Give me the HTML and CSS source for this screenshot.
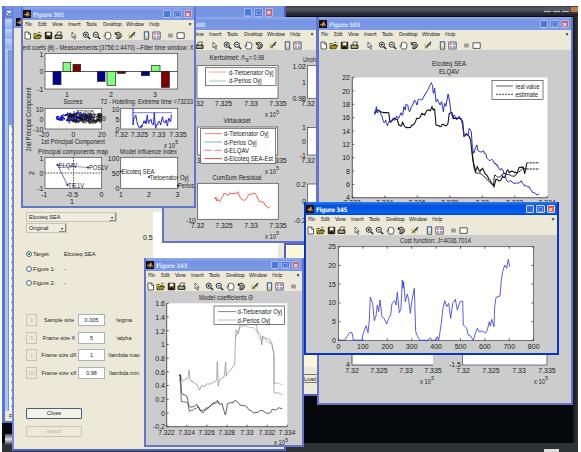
FILE: index.html
```html
<!DOCTYPE html>
<html lang="en">
<head>
<meta charset="utf-8">
<title>Desktop</title>
<link rel="stylesheet" href="styles.css">
</head>
<body>
<main class="desktop">
  <div class="app-bar"><i></i><i></i><i></i><i class="close"></i></div>
  <div class="edge"></div>
  <div class="taskbar"><span></span></div>
  <div class="tray"></div>

  <section class="word">
    <div class="word-title"><svg viewBox="0 0 9 8"><path d="M1 1h6v6H1z" fill="#e8f0ff" stroke="#3058b0"/><path d="M2.5 3l1 3 1-2 1 2 1-3" fill="none" stroke="#3058b0" stroke-width=".8"/></svg>07</div>
    <div class="word-bars"></div>
    <div class="word-ruler"></div>
    <div class="word-status">P</div>
  </section>

  <section class="gui">
    <div class="gui-title"><svg class="logo"><use href="#logo"/></svg><div class="buttons"><b>_</b><b>□</b><b class="x">×</b></div></div>
    <div class="gui-body">
      <form class="controls">
        <div class="select wide">Elcoteq SEA<em>▾</em></div>
        <div class="select">Original<em>▾</em></div>
        <div class="radios">
          <label class="on"><i></i><span>Target:</span>Elcoteq SEA</label>
          <label><i></i><span>Figure 1:</span>-</label>
          <label><i></i><span>Figure 2:</span>-</label>
        </div>
        <div class="params">
          <i>1</i><span>Sample size</span><b>0.005</b><span>\sigma</span>
          <i>5</i><span>Frame size X</span><b>5</b><span>\alpha</span>
          <i>1</i><span>Frame size dX</span><b>1</b><span>\lambda max</span>
          <i>20</i><span>Frame size sX</span><b>0.98</b><span>\lambda min</span>
        </div>
        <div class="push">Close</div>
        <div class="push off">report</div>
      </form>
      <div class="plot"><span>0.5</span><div></div></div>
    </div>
  </section>

  <section class="loader"><div class="paper"></div><div class="load">Load</div></section>

  <section class="fig f500 inactive" data-title="Figure 500" data-box="162 17 156 226"></section>
  <section class="fig f301 inactive" data-title="Figure 301" data-box="21 7 175 201"></section>
  <section class="fig f503 inactive" data-title="Figure 503" data-box="317 17 256 388"></section>
  <section class="fig f343 inactive" data-title="Figure 343" data-box="144 258 160 189"></section>
  <section class="fig f345" data-title="Figure 345" data-box="304 202 255 153"></section>
</main>

<svg class="defs">
  <symbol id="logo" viewBox="0 0 8 8"><rect width="8" height="8" fill="#101018"/><path d="M.8 5L3 3.6 5 1l2.3 5.4L5.6 5.3 4 7 3 5.2z" fill="#e87820"/><path d="M.8 5L3 3.6 4 4.2 3 5.2z" fill="#58b0d0"/></symbol>
  <symbol id="new" viewBox="0 0 9 9"><path d="M2 1h3.5L7.5 3v5H2z" fill="#fff" stroke="#333" stroke-width=".8"/><path d="M5.3 1v2.2h2.2" fill="none" stroke="#333" stroke-width=".7"/></symbol>
  <symbol id="open" viewBox="0 0 9 9"><path d="M1 7.5V2.5h2.5l.8 1H7v1" fill="#f0e070" stroke="#554c10" stroke-width=".9"/><path d="M1 7.7L2.7 4.5h6L7 7.7z" fill="#a09020" stroke="#3c3808" stroke-width=".8"/><path d="M5 1.5q2-1 3 1" fill="none" stroke="#222" stroke-width=".7"/></symbol>
  <symbol id="save" viewBox="0 0 9 9"><path d="M1.3 1.3h6.4v6.4H1.3z" fill="#504818" stroke="#111"/><path d="M2.8 1.5h3.6v2.8H2.8z" fill="#f4f4f4"/><path d="M3 5.6h3v2H3z" fill="#111"/></symbol>
  <symbol id="print" viewBox="0 0 9 9"><path d="M2.5 4l1-3h4l-1 3" fill="#fff" stroke="#333" stroke-width=".8"/><path d="M1 4h7v3.5H1z" fill="#8b8978" stroke="#222" stroke-width=".9"/><path d="M2 5.8h4" stroke="#eee060" stroke-width=".8"/></symbol>
  <symbol id="arrow" viewBox="0 0 9 9"><path d="M3 1v5.8l1.4-1.3 1.2 2.7 1-.5-1.2-2.5h1.7z" fill="#fff" stroke="#333" stroke-width=".7"/></symbol>
  <symbol id="zin" viewBox="0 0 9 9"><circle cx="3.8" cy="3.7" r="2.6" fill="#e4f0fa" stroke="#222" stroke-width=".9"/><path d="M2.4 3.7h2.8M3.8 2.3v2.8" stroke="#111" stroke-width=".8"/><path d="M5.7 5.7L8.2 8" stroke="#222" stroke-width="1.4"/></symbol>
  <symbol id="zout" viewBox="0 0 9 9"><circle cx="3.8" cy="3.7" r="2.6" fill="#e4f0fa" stroke="#222" stroke-width=".9"/><path d="M2.4 3.7h2.8" stroke="#111" stroke-width=".8"/><path d="M5.7 5.7L8.2 8" stroke="#222" stroke-width="1.4"/></symbol>
  <symbol id="hand" viewBox="0 0 9 9"><path d="M3 8L.8 4.8l.8-.6 1.2 1L2.2 2l.9-.2L3.7 1l.8.6 1-.6.7.9 1 0 .9 2.4L7 8z" fill="#fff" stroke="#333" stroke-width=".8"/></symbol>
  <symbol id="rot" viewBox="0 0 9 9"><path d="M2 2.2A3.2 3.2 0 1 1 1.8 6.7" fill="none" stroke="#222"/><path d="M.8.8v3h3z" fill="#222"/><path d="M3 4l1.5-1L6 4v2L4.5 7 3 6z" fill="#aaa" stroke="#222" stroke-width=".7"/></symbol>
  <symbol id="brush" viewBox="0 0 9 9"><path d="M1 2h4v5H1z" fill="#e4deb4"/><path d="M3.5 6L8 1" stroke="#333" stroke-width="1.3"/><path d="M2 4.4l3 3M2 7.5l2.5-3" stroke="#777010"/><path d="M6 4h2" stroke="#4060c0"/></symbol>
  <symbol id="cbar" viewBox="0 0 9 9"><path d="M2.3.8h4.4v7.4H2.3z" fill="#d4ecff" stroke="#243c70" stroke-width=".9"/><path d="M3.2 5h2.7v2.5H3.2z" fill="#f0d060"/></symbol>
  <symbol id="leg" viewBox="0 0 9 9"><path d="M.8 1h7.4v7H.8z" fill="#f8f8ff" stroke="#504868" stroke-width=".9"/><path d="M2 3h2M2 6h2" stroke="#c02020"/><path d="M5 3h2.3M5 6h2.3" stroke="#2038a0"/></symbol>
  <symbol id="sq" viewBox="0 0 9 9"><path d="M2.2 2.5h4.6v4H2.2z" fill="#999"/></symbol>
  <symbol id="rect" viewBox="0 0 9 9"><path d="M1 1.8h7.2v5.6H1z" fill="#fff" stroke="#444" stroke-width=".9"/></symbol>
</svg>
<script src="app.js"></script>
</body>
</html>
```
FILE: styles.css
```css
* { box-sizing: border-box; }
body { margin: 0; width: 581px; height: 452px; overflow: hidden; background: #fff; font: 6px "Liberation Sans", Arial, sans-serif; color: #222; }
.defs { display: none; }
i, em { font-style: normal; }
.desktop { position: absolute; left: 2px; top: 6px; width: 576px; height: 446px; background: #07080b; overflow: hidden; }
.desktop > section, .app-bar, .edge, .taskbar, .tray { position: absolute; }
.app-bar { left: 272px; top: 0; right: 0; height: 10px; background: linear-gradient(#3a3f48, #555963 35%, #22252b 85%); display: flex; justify-content: flex-end; gap: 2px; padding-top: 1px; }
.app-bar i { width: 7px; height: 5px; background: #555a62; border-bottom: 1px solid #bbb; }
.app-bar .close { background: #c47842; border: 0; }
.edge { right: 0; top: 10px; width: 5px; bottom: 0; background: linear-gradient(90deg, #16181c, #34383e); }
.taskbar { left: 0; right: 0; bottom: 0; height: 9px; background: #2d3436; }
.taskbar span { position: absolute; left: 542px; bottom: 0; width: 15px; height: 3px; background: #ddd; }
.tray { left: 3px; top: 428px; width: 9px; height: 11px; background: linear-gradient(#555, #ddd 50%, #333); }

.word { left: 0; top: 0; width: 273px; height: 417px; background: #adc6f2; border: solid #5876d4; border-width: 0 0 2px 3px; }
.word-title { height: 13px; background: #7694e2; color: #fff; font-size: 7px; line-height: 14px; display: flex; gap: 1px; }
.word-title svg { width: 9px; height: 8px; margin-top: 3px; }
.word-bars { height: 31px; background: repeating-linear-gradient(#bdd3f8, #8eadea 10px); }
.word-ruler { height: 361px; margin-left: 3px; width: 7px; border-left: 1px solid #7894cc; background: linear-gradient(#829ddd 75px, transparent 75px), repeating-linear-gradient(90deg, #fff 0 2px, transparent 2px 3px, #fff 3px 7px), repeating-linear-gradient(#fff 0 4px, #666 4px 5px, #fff 5px 8px); }
.word-status { height: 10px; background: #ece9d8; padding: 2px 4px; }

.gui { left: 10px; top: 0; width: 274px; height: 445px; background: #ece9d8; border: 2px solid #5060c0; border-top: 0; border-left-color: #7186dc; }
.gui-title { height: 22px; background: #7694e2; display: flex; justify-content: space-between; }
.gui-title .logo { margin: 12px 0 0 2px; width: 8px; height: 8px; }
.gui-title .buttons { margin: 2px 11px 0 0; }
.gui-body { display: flex; height: 421px; padding-top: 184px; }
.controls { width: 124px; padding-left: 12px; flex: none; }
.select { display: flex; justify-content: space-between; width: 41px; height: 10px; margin-bottom: 1px; padding-left: 2px; line-height: 9px; border: 1px solid #c8c5b8; background: #efecdf; font-size: 5.6px; }
.select.wide { width: 91px; }
.select em { width: 7px; border: solid #888; border-width: 0 1px 1px 0; text-align: center; font-size: 4px; }
.radios { margin-top: 16px; display: grid; gap: 4.5px; }
.radios label { display: flex; height: 10px; align-items: center; font-size: 5.6px; }
.radios i { width: 6px; height: 6px; border: 1px solid #466b90; border-radius: 50%; background: #fff; margin-right: 1px; }
.radios .on i { background: radial-gradient(#209020 30%, #fff 45%); }
.radios span { width: 31px; }
.params { margin-top: 26px; width: 114px; display: grid; grid-template-columns: 11px 41px 27px 35px; row-gap: 5.5px; text-align: center; font-size: 5.5px; line-height: 12px; }
.params i { border: 1px solid #c7c4b6; color: #bbb8a8; line-height: 10px; }
.params b { font-weight: 400; border: 1px solid #a5b4c0; background: #fff; line-height: 10px; }
.params span { white-space: nowrap; padding-left: 3px; }
.push { width: 56px; height: 11px; margin-top: 29px; border: 1px solid #4a5d78; border-radius: 1px; background: #f3f2ea; text-align: center; line-height: 9px; font-size: 5.6px; }
.push.off { margin-top: 7px; border-color: #c8c5b8; background: #ece9d8; color: #b5b2a4; }
.plot { display: flex; align-items: flex-start; }
.plot span { font-size: 7px; width: 15px; padding-left: 5px; margin-top: 22px; }
.plot div { width: 125px; height: 100px; background: #fff; }

.loader { left: 282px; top: 237px; width: 50px; height: 153px; background: #ece9d8; border: 2px solid #5060c0; }
.paper { height: 122px; background: #fbf8da; }
.load { margin: 7px 0 0 17px; height: 9px; border: 1px solid #777; font-size: 5.6px; line-height: 8px; }

.fig { display: flex; flex-direction: column; border: 2px solid #0836c4; border-top: 0; background: #ccc; overflow: hidden; }
.fig.inactive { border-color: #6474cc; }
.f500 { left: 160px; top: 11px; width: 156px; height: 226px; }
.f301 { left: 19px; top: 1px; width: 175px; height: 201px; }
.f503 { left: 315px; top: 11px; width: 256px; height: 388px; }
.f345 { left: 302px; top: 196px; width: 255px; height: 153px; }
.f343 { left: 142px; top: 252px; width: 160px; height: 189px; }
.f500 .buttons { display: none; }
.bar { flex: none; height: 13px; margin: 0 -2px; display: flex; align-items: center; padding: 1px 4px 0 2px; gap: 2px; background: linear-gradient(#2a7cf0, #0351dc 30%, #0560f4 85%, #0340b4); color: #fff; font: bold 6.2px "DejaVu Sans Condensed", "DejaVu Sans", sans-serif; letter-spacing: -.25px; }
.inactive .bar { background: linear-gradient(#93abeb, #7593e2 30%, #7d9ae6); color: #d5e2fa; }
.bar svg { width: 8px; height: 8px; }
.buttons { display: flex; gap: 2px; margin-left: auto; }
.buttons b { width: 8.5px; height: 8.5px; border: .5px solid #cfdcff; border-radius: 1px; background: #3568e0; color: #fff; font: bold 7px/7px "Liberation Sans", sans-serif; text-align: center; }
.buttons .x { background: #dc5533; }
.inactive .buttons b, .gui .buttons b { background: #4a78dc; border-color: #a5bcf4; }
.inactive .buttons .x, .gui .buttons .x { background: #c0667c; }
.menu { flex: none; height: 10px; background: #ece9d8; display: grid; grid-template-columns: 13px 14px 16px 18px 17px 23px 23px 1fr auto; padding: 0 3px 0 2px; font: 5.5px/9px "DejaVu Sans Condensed", "DejaVu Sans", sans-serif; letter-spacing: -.3px; }
.tools { flex: none; height: 10px; background: #ece9d8; display: flex; align-items: center; overflow: hidden; }
.tools svg { flex: none; width: 9px; height: 9px; }
.fig > .canvas { flex: none; display: block; margin: 0 -2px; }
.canvas text { font: 7px "Liberation Sans", Arial, sans-serif; fill: #222; }
.canvas .sup { font-size: 5px; }
```
FILE: app.js
```js
const MENU = ['File', 'Edit', 'View', 'Insert', 'Tools', 'Desktop', 'Window', 'Help', '▾'];
// Toolbar icons with the distance of each centre from the window's left edge
const TOOLS = [['new', 6], ['open', 16.5], ['save', 27], ['print', 37.5], ['arrow', 52], ['zin', 65], ['zout', 75.5],
  ['hand', 86], ['rot', 97], ['brush', 110], ['cbar', 125], ['leg', 135], ['sq', 149], ['rect', 159]];

const T = (x, y, s, a = 'middle', len) =>
  `<text x="${x}" y="${y + 2.5}" text-anchor="${a}"${len ? ` textLength="${len}" lengthAdjust="spacingAndGlyphs"` : ''}>${s}</text>`;
const R = (x, y, w, h, fill = '#fff', stroke = '#444') =>
  `<rect x="${x}" y="${y}" width="${w}" height="${h}" fill="${fill}" stroke="${stroke}" stroke-width=".7"/>`;
const L = (x1, y1, x2, y2, c = '#333', extra = '') =>
  `<line x1="${x1}" y1="${y1}" x2="${x2}" y2="${y2}" stroke="${c}" stroke-width=".8" ${extra}/>`;
const E = (x, y) => T(x, y, 'x 10', 'start', 11) + `<text class="sup" x="${x + 11.3}" y="${y - 0.8}">5</text>`;
const xs = (y, arr) => arr.map(([x, s]) => T(x, y, s)).join('');
const ys = (x, arr) => arr.map(([y, s]) => T(x, y, s, 'end')).join('');

// Series in thirds of a pixel from (ox, oy); jit adds fine market noise between samples
function P(ox, oy, str, color, o = {}) {
  const p = str.split(' ').map(q => q.split(',').map(Number));
  const out = [];
  let seed = 7;
  p.forEach(([x, y], i) => {
    if (i && o.jit) {
      const [a, b] = p[i - 1];
      for (let k = 1; k < 3; k++) {
        seed = (seed * 16807) % 2147483647;
        out.push([a + (x - a) * k / 3, b + (y - b) * k / 3 + (seed / 2147483647 - .5) * o.jit]);
      }
    }
    out.push([x, y]);
  });
  const pts = out.map(([x, y]) => (ox + x / 3).toFixed(1) + ',' + (oy + y / 3).toFixed(1)).join(' ');
  return `<polyline points="${pts}" fill="none" stroke="${color}" stroke-width="${o.w || .8}" ${o.dash ? `stroke-dasharray="${o.dash}"` : ''}/>`;
}

const charts = {
  f503() {
    let s = T(449, 63.5, 'Elcoteq SEA', 'middle', 34) + T(449, 71, 'ELQAV', 'middle', 20) + R(352.3, 77.5, 195.2, 120.2, '#fff', 'none') + L(352.3, 77.5, 352.3, 197.7) + L(352.3, 197.7, 547.5, 197.7);
    for (let i = 0; i < 10; i++) s += T(350, 77.7 + i * 13.36, 22 - 2 * i, 'end') + L(352.3, 77.5 + i * 13.36, 354.3, 77.5 + i * 13.36);
    ['7.322', '7.324', '7.326', '7.328', '7.33', '7.332', '7.334'].forEach((t, i) => s += T(352 + i * 32.5, 202, t) + L(352.3 + i * 32.5, 195.7, 352.3 + i * 32.5, 197.7));
    s += P(300, 90, '224,73 230,60 244,66 266,68 270,95 284,85 292,88 296,105 304,108 308,97 314,110 332,112 336,105 344,100 350,85 360,82 366,70 374,75 382,60 390,62 396,50 400,60 404,58 408,105 420,110 430,103 436,108 444,100 448,70 456,68 460,85 480,85 488,95 492,138 500,132 508,140 512,150 516,190 522,232 526,245 532,230 540,245 547,235 556,252 564,262 572,275 582,290 588,268 600,272 608,258 614,262 622,240 628,248 640,245 650,250 658,232 670,232 674,252 680,220', '#111', { jit: 5, w: 1.1 });
    s += P(300, 90, '516,180 520,215 528,248 540,250 556,262 570,278 580,285 584,255 596,262 614,250 630,255 645,258 656,245 668,235 680,237', '#111', { jit: 5, w: .9 });
    s += P(300, 90, '680,219 718,218', '#111', { dash: '2 1', w: 1 }) + P(300, 90, '680,237 718,237', '#111', { dash: '2 1', w: 1 });
    s += P(300, 90, '224,73 229,50 232,68 238,62 246,78 252,98 257,90 262,107 268,92 272,98 280,84 286,90 290,78 296,85 303,68 308,75 312,50 316,60 318,42 324,48 328,65 332,58 336,48 344,30 350,45 356,28 364,30 370,22 378,10 384,0 388,-10 394,-22 398,-10 400,10 404,-5 408,35 413,28 420,45 425,35 430,65 434,40 438,48 444,12 448,30 452,62 458,85 463,75 470,90 478,78 484,85 488,105 492,140 498,132 504,138 508,115 514,125 516,160 520,190 524,182 530,165 534,182 548,184 556,190 562,205 570,212 578,210 584,222 592,225 600,240 606,238 614,250 620,272 636,276 650,278 664,272 674,288 688,290 698,308 708,312 718,312', '#2626d0', { jit: 8, w: 1 });
    s += R(492, 80.5, 51, 19) + L(496, 86, 513, 86) + L(496, 94.3, 513, 94.3, '#111', 'stroke-dasharray="2 1"') + T(515.5, 86, 'real value', 'start', 24) + T(515.5, 94.3, 'estimate', 'start', 22.5);
    s += R(352, 340, 81, 25, '#fff', 'none') + L(352, 340, 352, 365) + L(352, 365, 433, 365) + R(462.5, 340, 84.5, 25);
    s += T(350, 364.5, '4', 'end') + T(461, 364.5, '-1.5', 'end') + xs(370, [[352, '7.32'], [379, '7.325'], [406, '7.33'], [433, '7.335'], [463, '7.32'], [491, '7.325'], [519, '7.33'], [547, '7.335']]) + E(420, 381) + E(534, 381);
    return s;
  },
  f345() {
    let s = T(435.5, 240, 'Cost function:  J=4036.7014', 'middle', 71) + R(338.5, 246.7, 195, 93.7);
    for (let i = 0; i < 6; i++) { const y = 246.7 + i * 18.74; s += T(336, y, 25 - 5 * i, 'end') + L(338.5, y, 340.5, y) + L(531.5, y, 533.5, y); }
    for (let i = 0; i < 9; i++) { const x = 338.5 + i * 24.4; s += T(x, 346, i * 100) + L(x, 338.4, x, 340.4) + L(x, 246.7, x, 248.7); }
    return s + P(300, 300, '115,121 135,120 142,108 150,97 156,98 160,120 185,121 190,100 198,77 204,98 208,60 211,-8 218,10 223,62 228,48 232,15 236,35 240,0 246,50 252,55 260,72 266,55 272,45 276,10 284,2 288,15 292,-23 298,38 303,25 307,-60 309,-35 311,-55 316,5 322,-18 326,0 331,40 336,0 343,-35 347,95 354,112 360,121 384,121 391,113 396,121 406,121 412,110 416,121 424,70 428,30 434,2 440,20 446,10 452,55 458,10 466,-2 472,30 480,5 488,3 490,75 500,85 505,105 512,108 520,121 528,95 532,85 538,96 548,93 556,100 562,90 568,65 571,78 575,58 582,80 584,20 588,-8 600,-12 604,-60 608,-85 614,-105 620,-95 625,-122 629,-100', '#3333e0');
  },
  f343() {
    let s = T(226, 297, 'Model coefficients Θ', 'middle', 54) + R(166.7, 303.3, 120.6, 123.4, '#fff', 'none') + L(166.7, 303.3, 166.7, 426.7) + L(166.7, 426.7, 287.3, 426.7);
    ['1.6', '1.4', '1.2', '1', '0.8', '0.6', '0.4', '0.2', '0', '-0.2'].forEach((t, i) => s += T(165, 303.6 + i * 13.71, t, 'end') + L(166.7, 303.3 + i * 13.71, 168.7, 303.3 + i * 13.71));
    ['7.322', '7.324', '7.326', '7.328', '7.33', '7.332', '7.334'].forEach((t, i) => s += T(166.5 + i * 20.1, 432, t, 'middle', t.length * 3.3) + L(166.7 + i * 20.1, 424.7, 166.7 + i * 20.1, 426.7));
    s += P(140, 340, '118,125 122,105 126,122 138,118 145,110 147,90 150,118 160,128 170,132 178,150 186,135 196,138 204,130 214,130 222,125 230,118 232,65 235,138 240,118 252,112 257,66 259,108 266,95 274,88 284,75 286,10 288,-30 296,-20 300,-45 350,-45 352,-25 362,-15 365,15 368,-12 380,-5 390,0 396,15 401,40 402,158 418,160 428,166', '#888', { jit: 9, w: .7 });
    s += P(140, 340, '286,-5 292,-20 298,-35 306,-42 340,-38 350,-28 362,0 372,-5 386,8 396,10 403,50 403,131 428,133', '#999', { jit: 8, w: .6 });
    s += P(140, 340, '118,108 121,105 124,158 140,168 148,200 160,200 170,192 180,212 190,210 204,205 216,192 230,182 238,192 246,190 256,225 262,192 276,188 286,182 300,195 320,200 340,218 360,212 380,220 392,218 398,208 426,206', '#333', { jit: 8 });
    s += P(140, 340, '121,110 124,185 144,190 148,215 165,205 176,200 186,218 200,208 220,188 240,190', '#333', { jit: 8, w: .7 });
    s += R(214, 306, 70.5, 18.5) + L(218, 311.6, 236, 311.6, '#666') + L(218, 320, 236, 320, '#aaa') + T(237.5, 311.6, 'd-Tietoenator Oyj', 'start', 44.5) + T(237.5, 320, 'd-Perlos Oyj', 'start', 32.5) + E(274, 442.5);
    return s;
  },
  f500() {
    let s = T(209.5, 57, 'Kertoimet:  Λ', 'start', 36) + '<text class="sup" x="245.8" y="61.5">9</text>' + T(249, 57, '= 0.98', 'start', 15) + T(303, 59.5, 'Unoh', 'start', 13);
    s += R(197, 65.7, 81, 32.6) + R(205.5, 67.7, 70.5, 18) + L(209, 72, 226, 72, '#e09090') + L(209, 81, 226, 81, '#88b8b8') + T(229, 72.3, 'd-Tietoenator Oyj', 'start', 44.5) + T(229, 80.8, 'd-Perlos Oyj', 'start', 32.5);
    s += xs(103.5, [[197, '7.32'], [223.5, '7.325'], [251, '7.33'], [278, '7.335'], [308, '7.32']]) + E(265, 114.5);
    s += R(307.5, 65.7, 30, 32.6) + ys(306, [[66, '1.02'], [82, '1'], [98, '0.98']]);
    s += T(237, 120.5, 'Virtaukset', 'middle', 27) + R(197.7, 127, 80, 28) + xs(160, [[198, '7.32'], [278, '7.335'], [308, '7.32']]) + R(200.7, 128.3, 75, 35);
    [['d-Tietoenator Oyj', '#e06060', 44.5], ['d-Perlos Oyj', '#60a0a0', 32.5], ['d-ELQAV', '#e06060', 25], ['d-Elcoteq SEA-Est', '#e02020', 49]].forEach(([t, c, w], i) => s += L(204.5, 133.7 + i * 8.3, 222, 133.7 + i * 8.3, c, i === 2 ? 'stroke-dasharray="7 3"' : '') + T(224, 133.7 + i * 8.3, t, 'start', w));
    s += E(265, 171) + R(307.5, 127.5, 30, 27.5) + ys(306, [[127.5, '1'], [141, '0'], [155, '-1']]);
    s += T(237, 177, 'CumSum Residual', 'middle', 49) + R(197.7, 183.3, 80.6, 36) + T(196, 220, '-10', 'end') + xs(225, [[197.5, '7.32'], [224, '7.325'], [251, '7.33'], [278, '7.335']]) + E(265, 236);
    s += R(307.5, 184, 30, 36) + ys(306, [[184, '0.2'], [201, '0'], [220, '-0.2']]);
    return s + P(160, 110, '165,268 168,262 170,273 174,268 179,275 186,262 192,250 198,252 204,256 210,250 228,250 232,246 236,250 242,265 250,270 260,265 268,252 285,250 298,275 312,278 318,288 330,293', '#e83030', { jit: 6 });
  },
  f301() {
    let s = T(22.5, 47.5, 'ent coefs (θ) - Measurements:(3756:1:4470) --Filter time window: X', 'start', 171) + R(45, 53.5, 132.7, 35.5) + L(45, 71.5, 177.7, 71.5);
    [[159, 183, 214, 254, 0], [189, 212, 187, 214, 1], [219, 242, 193, 214, 2], [292, 315, 214, 244, 0], [321, 347, 214, 256, 1], [352, 376, 214, 220, 2], [424, 448, 214, 227, 0], [455, 480, 196, 214, 1], [484, 508, 214, 262, 2]]
      .forEach(([a, b, c, d, k]) => s += R(a / 3, c / 3, (b - a) / 3, (d - c) / 3, ['#00008f', '#80ff80', '#800000'][k], '#222'));
    s += ys(43.5, [[54, '1'], [71.5, '0'], [89, '-1']]) + xs(94, [[67, '1'], [111, '2'], [155, '3']]);
    s += T(73, 101.5, 'Scores', 'middle', 19) + T(100.5, 101.5, 'T2 - Hotelling: Extreme time =73233', 'start', 92.5);
    s += R(45, 108.3, 56.7, 20.7) + R(120.7, 108.3, 57, 20.7) + ys(43.5, [[109, '10'], [119, '0'], [129, '-10']]) + ys(119.5, [[109, '10'], [119, '5'], [129, '0']]);
    // Score cloud: blue observations under dark label marks
    let r = 11; const rnd = () => (r = (r * 16807) % 2147483647) / 2147483647;
    for (let i = 0; i < 170; i++) { const u = rnd(), h = 3 + 6 * Math.sin(u * 3); s += `<circle cx="${(57 + u * 34).toFixed(1)}" cy="${(118.5 - 2 * Math.sin(u * 3) + (rnd() - .5) * h).toFixed(1)}" r=".8" fill="#1010c8"/>`; }
    for (let i = 0; i < 130; i++) { const x = 67 + rnd() * 35, y = 114 + rnd() * 9; s += `<circle cx="${x.toFixed(1)}" cy="${y.toFixed(1)}" r=".8" fill="none" stroke="#111" stroke-width=".6"/>`; }
    s += T(85, 112.5, '732605', 'middle', 18) + T(95, 118, '732339', 'middle', 22);
    s += xs(134, [[44, '-20'], [73.5, '0'], [102, '20'], [121, '7.32'], [139.5, '7.325'], [158.5, '7.33'], [178, '7.335']]) + E(164, 145);
    s += L(133, 112.7, 172, 112.7, '#5555e8') + P(0, 100, '399,25 399,75 402,55 407,45 411,65 417,83 422,78 426,80 432,62 438,72 442,45 446,70 453,58 460,75 463,38 467,85 472,72 476,65 482,75 488,50 492,68 498,60 502,78 506,55 510,65 516,45', '#2020dc', { jit: 14, w: 1 });
    s += T(73, 141.5, '1st Principal Component', 'middle', 64) + T(73, 151.5, 'Principal components map', 'middle', 70) + T(148.5, 151.5, 'Model influence index', 'middle', 57);
    s += `<g transform="translate(28 119.5) rotate(-90)">${T(0, 0, '2nd Principal Component', 'middle', 64)}</g><g transform="translate(31 173) rotate(-90)">${T(0, 0, '2')}</g>`;
    s += R(45, 157.3, 56.7, 31) + R(120.7, 157.3, 57, 31) + ys(43.5, [[158, '1'], [173, '0'], [188.5, '-1']]) + ys(119.5, [[158, '100'], [173, '50'], [188.5, '0']]);
    s += L(45, 173, 101.7, 173, '#222', 'stroke-dasharray="1.6 1.2"') + L(73.5, 157.3, 73.5, 188.3, '#222', 'stroke-dasharray="1.6 1.2"') + L(57.5, 165, 88, 167.5, '#7777cc') + L(57.5, 165, 67.5, 185, '#444499');
    [[57.5, 165], [88, 167.5], [67.5, 185], [120.7, 171.5], [149, 177], [178, 185.5]].forEach(([x, y]) => s += `<circle cx="${x}" cy="${y}" r="1.1" fill="#1c1c80"/>`);
    s += T(58.5, 165.5, 'ELQAV', 'start', 19) + T(89, 167.5, 'POS1V', 'start', 19) + T(68, 185.5, 'TIE1V', 'start', 16) + T(121.5, 171.5, 'Elcoteq SEA', 'start', 33) + T(149.5, 177.5, 'Tietoenator Oyj', 'start', 39) + T(178, 185.5, 'Perlos', 'start', 16);
    return s + xs(194, [[44, '-1'], [72, '-0.5'], [101.5, '0'], [121, '1'], [149, '2'], [177.5, '3']]) + T(72, 201, '1');
  }
};

document.querySelectorAll('.fig').forEach(f => {
  const [x, y, w, h] = f.dataset.box.split(' ').map(Number);
  let at = 2;
  const icons = TOOLS.filter(t => t[1] < w - 8).map(([id, c]) => {
    const gap = c - 4.5 - at;
    at = c + 4.5;
    return `<svg style="margin-left:${gap}px"><use href="#${id}"/></svg>`;
  }).join('');
  f.innerHTML = `<div class="bar"><svg><use href="#logo"/></svg><span>${f.dataset.title}</span><div class="buttons"><b>_</b><b>□</b><b class="x">×</b></div></div>
    <div class="menu">${MENU.map(m => `<span>${m}</span>`).join('')}</div><div class="tools">${icons}</div>
    <svg class="canvas" width="${w}" height="${h - 35}" viewBox="${x} ${y + 33} ${w} ${h - 35}">${charts[f.classList[1]]()}</svg>`;
});
```
